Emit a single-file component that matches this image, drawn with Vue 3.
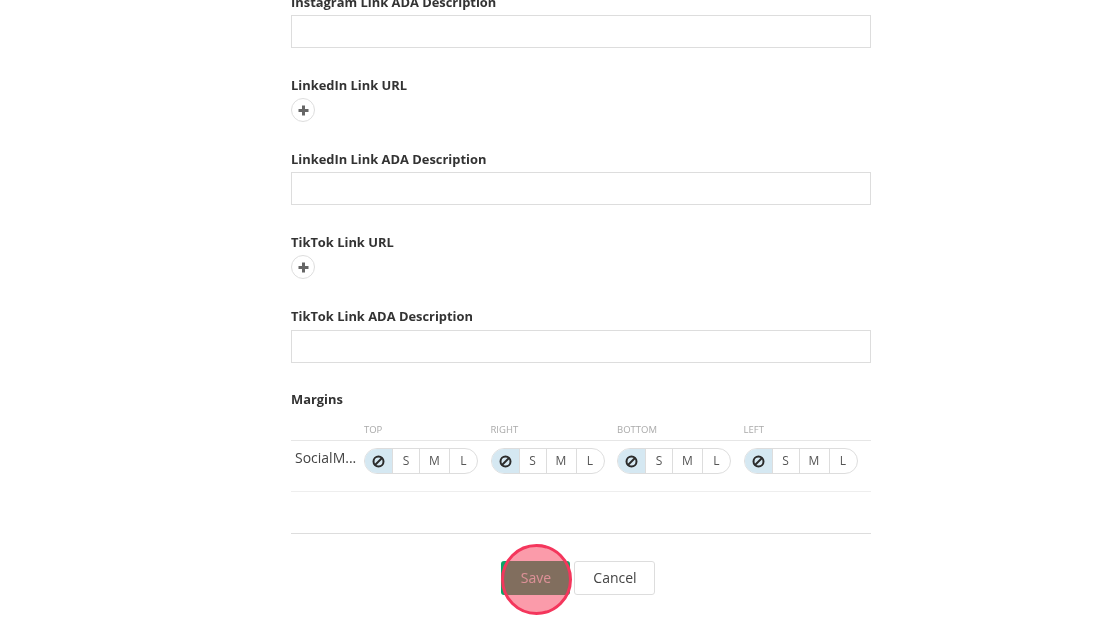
<script setup>
const fields = [
  { label: 'Instagram Link ADA Description', type: 'input' },
  { label: 'LinkedIn Link URL', type: 'add' },
  { label: 'LinkedIn Link ADA Description', type: 'input' },
  { label: 'TikTok Link URL', type: 'add' },
  { label: 'TikTok Link ADA Description', type: 'input' },
]
const sides = ['TOP', 'RIGHT', 'BOTTOM', 'LEFT']
const sizes = ['S', 'M', 'L']
</script>

<template>
  <div class="page">
    <div class="form">
      <div v-for="f in fields" :key="f.label" class="field">
        <label class="label">{{ f.label }}</label>
        <input v-if="f.type === 'input'" class="text" type="text" />
        <button v-else class="add-btn" type="button" aria-label="Add">
          <svg width="11" height="11" viewBox="0 0 11 11"><path d="M4 .5h3V4h3.5v3H7v3.5H4V7H.5V4H4z" fill="#666"/></svg>
        </button>
      </div>

      <div class="margins">
        <div class="label">Margins</div>
        <div class="head">
          <div class="name"></div>
          <div v-for="s in sides" :key="s" class="side">{{ s }}</div>
        </div>
        <div class="row">
          <div class="name">SocialM...</div>
          <div v-for="s in sides" :key="s" class="side">
            <div class="seg">
              <span class="opt none">
                <svg width="13" height="13" viewBox="0 0 13 13" fill="none" stroke="#2b2b2b" stroke-width="2"><circle cx="6.5" cy="6.5" r="5"/><path d="M3 10 10 3"/></svg>
              </span>
              <span v-for="z in sizes" :key="z" class="opt" :class="'sz-' + z">{{ z }}</span>
            </div>
          </div>
        </div>
      </div>

      <div class="actions">
        <div class="save-wrap">
          <button class="btn save" type="button">Save</button>
          <span class="spot"></span>
        </div>
        <button class="btn cancel" type="button">Cancel</button>
      </div>
    </div>
  </div>
</template>

<style>
html, body { margin: 0; overflow: hidden; background: #fff; }
</style>

<style scoped>
.page { height: 625px; overflow: hidden; font-family: "Open Sans", sans-serif; color: #333; }
.form { width: 580px; margin: -8px 0 0 291px; will-change: transform; }
.field { padding-bottom: 27px; }
.label { display: block; font-size: 12.9px; font-weight: 700; line-height: 20px; color: #333; }
.field .label { margin-bottom: 3.12px; }
.margins { margin-top: -0.4px; }
.text { display: block; box-sizing: border-box; width: 100%; height: 33px; border: 1px solid #ddd; background: #fff; margin: 0; padding: 0 8px; }
.add-btn { display: flex; align-items: center; justify-content: center; box-sizing: border-box; width: 24px; height: 24px; padding: 0; border: 1px solid #ddd; border-radius: 50%; background: #fff; }
.head { display: flex; height: 21px; margin-top: 10px; border-bottom: 1px solid #e6e6e6; font-size: 9.5px; line-height: 22px; color: #aaa; }
.name { width: 73px; padding-left: 4px; box-sizing: border-box; flex: none; }
.side { width: 126.5px; flex: none; }
.row { display: flex; height: 50px; border-bottom: 1px solid #eee; font-size: 14px; line-height: 20px; color: #444; }
.row .name { padding-top: 7px; }
.seg { display: inline-flex; box-sizing: border-box; height: 26px; margin-top: 7px; border: 1px solid #ddd; border-radius: 13px; overflow: hidden; background: #fff; }
.opt { display: flex; box-sizing: border-box; align-items: center; justify-content: center; width: 27px; border-left: 1px solid #ddd; font-size: 12px; color: #555; }
.opt.none { width: 27px; border-left: 0; background: #d5e8f2; }
.opt.sz-M { width: 30px; }
.opt.sz-L { width: 28px; }
.actions { display: flex; justify-content: center; gap: 4px; margin-top: 41px; padding-top: 27px; padding-right: 7px; border-top: 1px solid #ddd; }
.btn { box-sizing: border-box; height: 34px; font-family: inherit; font-size: 14px; border-radius: 3px; padding: 0 0 2px 2px; }
.save-wrap { position: relative; display: flex; }
.save { width: 69px; border: 0; background: #0aa566; color: rgba(255, 255, 255, 0.75); }
.cancel { width: 81px; border: 1px solid #ddd; background: #fff; color: #444; }
.spot { position: absolute; left: 0; top: -17px; box-sizing: border-box; width: 71px; height: 71px; border: 3px solid #f4365c; border-radius: 50%; background: rgba(247, 55, 85, 0.5); }
</style>
